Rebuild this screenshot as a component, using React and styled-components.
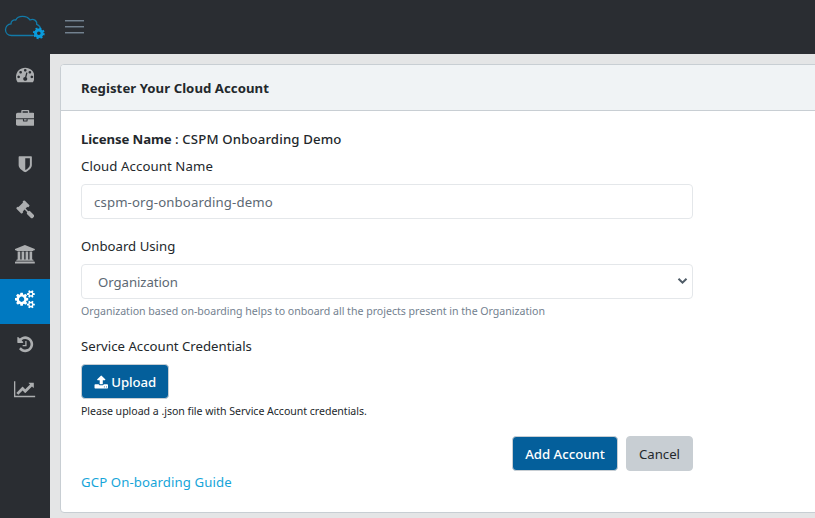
import React from "react";
import styled, { createGlobalStyle } from "styled-components";

const GlobalStyle = createGlobalStyle`
  * { box-sizing: border-box; }
  body {
    margin: 0;
    overflow: hidden;
    background: #e4e5e6;
    color: #23282c;
    font-family: "Noto Sans", "Open Sans", sans-serif;
    font-size: 13.2px;
    line-height: 21px;
  }
`;

const Page = styled.div`
  display: flex;
  flex-direction: column;
  width: 100vw;
  height: 100vh;
`;

const TopBar = styled.header`
  display: flex;
  align-items: center;
  flex: 0 0 54px;
  padding-left: 4px;
  background: #2a2d32;
`;

const Logo = styled.svg`
  width: 42px;
  height: 26px;
`;

const MenuButton = styled.button`
  display: flex;
  flex-direction: column;
  gap: 5px;
  width: 19px;
  margin: 0 0 2px 19px;
  padding: 0;
  border: 0;
  background: none;
`;

const MenuLine = styled.span`
  height: 1px;
  background: #73818f;
  box-shadow: 0 1px #4a545e;
`;

const Columns = styled.div`
  display: flex;
  flex: 1;
  min-height: 0;
`;

const Sidebar = styled.nav`
  flex: 0 0 50px;
  background: #2a2d32;
`;

const NavItem = styled.a`
  display: flex;
  align-items: center;
  justify-content: center;
  height: 45px;
  padding-bottom: 4.5px;
  color: ${(p) => (p.$active ? "#fff" : "#acaeb0")};
  background: ${(p) => (p.$active ? "#0079c1" : "transparent")};
`;

const Glyph = styled.svg`
  display: block;
  flex: none;
  height: ${(p) => p.$size}px;
  width: ${(p) => p.$size * p.$ratio}px;
  fill: currentColor;
`;

const Main = styled.main`
  flex: 1;
  padding: 10px 0 0 10px;
  min-width: 0;
`;

const Card = styled.section`
  width: 780px;
  height: 449px;
  border: 1px solid #c8ced3;
  border-radius: 4px;
  background: #fff;
  overflow: hidden;
`;

const CardHeader = styled.h1`
  height: 46px;
  margin: 0;
  padding: 13px 20px 11px;
  border-bottom: 1px solid #c8ced3;
  background: #f0f3f5;
  font-size: 13.2px;
  line-height: 21px;
  font-weight: 700;
`;

const Form = styled.form`
  display: flex;
  flex-direction: column;
  width: 652px;
  padding: 18px 20px 0;
`;

const Spaced = styled.span`
  letter-spacing: ${(p) => p.$track || 0}px;
  white-space: pre;
`;

const Line = styled.div`
  height: 21px;
  font-weight: 500;
`;

const Field = styled.div`
  display: flex;
  flex-direction: column;
  align-items: flex-start;
  height: ${(p) => p.$height}px;
  margin-top: ${(p) => p.$top || 0}px;
`;

const Label = styled.label`
  height: 21px;
  margin-bottom: 7px;
`;

const Control = styled.div`
  display: flex;
  align-items: center;
  justify-content: space-between;
  width: 100%;
  height: 35px;
  padding: 1px ${(p) => (p.$select ? "4px 0 16px" : "12px 0")};
  border: 1px solid #e4e7ea;
  border-radius: 4px;
  color: #5c6873;
`;

const Chevron = styled.svg`
  width: 11px;
  height: 8px;
  margin-bottom: 2px;
  fill: none;
  stroke: #4f5c67;
  stroke-width: 2;
`;

const Hint = styled.small`
  margin-top: ${(p) => p.$top}px;
  font-size: 10.6px;
  line-height: 17px;
  color: ${(p) => (p.$muted ? "#73818f" : "#23282c")};
`;

const Button = styled.button`
  display: flex;
  align-items: center;
  justify-content: center;
  gap: 3px;
  width: ${(p) => p.$width}px;
  height: 35px;
  padding: 1px 0 0;
  border: 1px solid #c8ced3;
  border-radius: 4px;
  font: inherit;
  font-weight: ${(p) => (p.$primary ? 500 : 400)};
  color: ${(p) => (p.$primary ? "#fff" : "#23282c")};
  background: ${(p) => (p.$primary ? "#045f9b" : "#c8ced3")};
`;

const Actions = styled.div`
  display: flex;
  justify-content: flex-end;
  gap: 8px;
`;

const GuideLink = styled.a`
  height: 21px;
  margin-top: 1px;
  color: #16a5d9;
`;

const SMALL_COG =
  "v140q0 16-149 31-12 27-30 52 51 113 51 138 0 4-4 7-122 71-124 71-8 0-46-47t-52-68q-20 2-30 2t-30-2q-14 21-52 68t-46 47q-2 0-124-71-4-3-4-7 0-25 51-138-18-25-30-52-149-15-149-31v-140q0-16 149-31 13-29 30-52-51-113-51-138 0-4 4-7 4-2 35-20t59-34 30-16q8 0 46 46.5t52 67.5q20-2 30-2t30 2q51-71 92-112l6-2q4 0 124 70 4 3 4 7 0 25-51 138 17 23 30 52 149 15 149 31z";

const ICONS = {
  dashboard: {
    width: 1792,
    d: "M384 1152q0-53-37.5-90.5t-90.5-37.5-90.5 37.5-37.5 90.5 37.5 90.5 90.5 37.5 90.5-37.5 37.5-90.5zm192-448q0-53-37.5-90.5t-90.5-37.5-90.5 37.5-37.5 90.5 37.5 90.5 90.5 37.5 90.5-37.5 37.5-90.5zm428 481l101-382q6-26-7.5-48.5t-38.5-29.5-48 6.5-30 39.5l-101 382q-60 5-107 43.5t-63 98.5q-20 77 20 146t117 89 146-20 89-117q16-60-6-117t-72-91zm660-33q0-53-37.5-90.5t-90.5-37.5-90.5 37.5-37.5 90.5 37.5 90.5 90.5 37.5 90.5-37.5 37.5-90.5zm-640-640q0-53-37.5-90.5t-90.5-37.5-90.5 37.5-37.5 90.5 37.5 90.5 90.5 37.5 90.5-37.5 37.5-90.5zm448 192q0-53-37.5-90.5t-90.5-37.5-90.5 37.5-37.5 90.5 37.5 90.5 90.5 37.5 90.5-37.5 37.5-90.5zm320 448q0 261-141 483-19 29-54 29h-1402q-35 0-54-29-141-221-141-483 0-182 71-348t191-286 286-191 348-71 348 71 286 191 191 286 71 348z",
  },
  briefcase: {
    width: 1792,
    d: "M640 256h512v-128h-512v128zm1152 640v480q0 66-47 113t-113 47h-1472q-66 0-113-47t-47-113v-480h672v160q0 26 19 45t45 19h320q26 0 45-19t19-45v-160h672zm-768 0v128h-256v-128h256zm768-480v384h-1792v-384q0-66 47-113t113-47h352v-160q0-40 28-68t68-28h576q40 0 68 28t28 68v160h352q66 0 113 47t47 113z",
  },
  shield: {
    width: 1792,
    d: "M1344 960v-640h-448v1137q119-63 213-137 235-184 235-360zm192-768v768q0 86-33.5 170.5t-83 150-118 127.5-126.5 103-121 77.5-89.5 49.5-42.5 20q-12 6-26 6t-26-6q-16-7-42.5-20t-89.5-49.5-121-77.5-126.5-103-118-127.5-83-150-33.5-170.5v-768q0-26 19-45t45-19h1152q26 0 45 19t19 45z",
  },
  gavel: {
    width: 1792,
    d: "M1771 1536q0 53-37 90l-107 108q-39 37-91 37-53 0-90-37l-363-364q-38-36-38-90 0-53 43-96l-256-256-126 126q-14 14-34 14t-34-14q2 2 12.5 12t12.5 13 10 11.5 10 13.5 6 13.5 5.5 16.5 1.5 18q0 38-28 68-3 3-16.5 18t-19 20.5-18.5 16.5-22 15.5-22 9-26 4.5q-40 0-68-28l-408-408q-28-28-28-68 0-13 4.5-26t9-22 15.5-22 16.5-18.5 20.5-19 18-16.5q30-28 68-28 10 0 18 1.5t16.5 5.5 13.5 6 13.5 10 11.5 10 13 12.5 12 12.5q-14-14-14-34t14-34l348-348q14-14 34-14t34 14q-2-2-12.5-12t-12.5-13-10-11.5-10-13.5-6-13.5-5.5-16.5-1.5-18q0-38 28-68 3-3 16.5-18t19-20.5 18.5-16.5 22-15.5 22-9 26-4.5q40 0 68 28l408 408q28 28 28 68 0 13-4.5 26t-9 22-15.5 22-16.5 18.5-20.5 19-18 16.5q-30 28-68 28-10 0-18-1.5t-16.5-5.5-13.5-6-13.5-10-11.5-10-13-12.5-12-12.5q14 14 14 34t-14 34l-126 126 256 256q43-43 96-43 52 0 91 37l363 363q37 39 37 91z",
  },
  bank: {
    width: 1920,
    d: "M960 0l960 384v128h-128q0 26-20.5 45t-48.5 19h-1526q-28 0-48.5-19t-20.5-45h-128v-128zm-704 640h256v768h128v-768h256v768h128v-768h256v768h128v-768h256v768h59q28 0 48.5 19t20.5 45v64h-1664v-64q0-26 20.5-45t48.5-19h59v-768zm1595 960q28 0 48.5 19t20.5 45v128h-1920v-128q0-26 20.5-45t48.5-19h1782z",
  },
  cogs: {
    x: -64,
    width: 1920,
    d:
      "M832 896q0-106-75-181t-181-75-181 75-75 181 75 181 181 75 181-75 75-181zm768 512q0-52-38-90t-90-38-90 38-38 90q0 53 37.5 90.5t90.5 37.5 90.5-37.5 37.5-90.5zm0-1024q0-52-38-90t-90-38-90 38-38 90q0 53 37.5 90.5t90.5 37.5 90.5-37.5 37.5-90.5zm-384 421v185q0 10-7 19.5t-16 10.5l-155 24q-11 35-32 76 34 48 90 115 7 11 7 20 0 12-7 19-23 30-82.5 89.5t-78.5 59.5q-11 0-21-7l-115-90q-37 19-77 31-11 108-23 155-7 24-30 24h-186q-11 0-20-7.5t-10-17.5l-23-153q-34-10-75-31l-118 89q-7 7-20 7-11 0-21-8-144-133-144-160 0-9 7-19 10-14 41-53t47-61q-23-44-35-82l-152-24q-10-1-17-9.5t-7-19.5v-185q0-10 7-19.5t16-10.5l155-24q11-35 32-76-34-48-90-115-7-11-7-20 0-12 7-20 22-30 82-89t79-59q11 0 21 7l115 90q34-18 77-32 11-108 23-154 7-24 30-24h186q11 0 20 7.5t10 17.5l23 153q34 10 75 31l118-89q8-7 20-7 11 0 21 8 144 133 144 160 0 8-7 19-12 16-42 54t-45 60q23 48 34 82l152 23q10 2 17 10.5t7 19.5z" +
      "M1856 1338" + SMALL_COG + "M1856 314" + SMALL_COG,
  },
  history: {
    width: 1792,
    d: "M1664 896q0 156-61 298t-164 245-245 164-298 61q-172 0-327-72.5t-264-204.5q-7-10-6.5-22.5t8.5-20.5l137-138q10-9 25-9 16 2 23 12 73 95 179 147t225 52q104 0 198.5-40.5t163.5-109.5 109.5-163.5 40.5-198.5-40.5-198.5-109.5-163.5-163.5-109.5-198.5-40.5q-98 0-188 35.5t-160 101.5l137 138q31 30 14 69-17 40-59 40h-448q-26 0-45-19t-19-45v-448q0-42 40-59 39-17 69 14l130 129q107-101 244.5-156.5t284.5-55.5q156 0 298 61t245 164 164 245 61 298zm-640-288v448q0 14-9 23t-23 9h-320q-14 0-23-9t-9-23v-64q0-14 9-23t23-9h224v-352q0-14 9-23t23-9h64q14 0 23 9t9 23z",
  },
  chart: {
    width: 2048,
    d: "M2048 1536v128h-2048v-1536h128v1408h1920zm-128-1248v435q0 21-19.5 29.5t-35.5-7.5l-121-121-633 633q-10 10-23 10t-23-10l-233-233-416 416-192-192 585-585q10-10 23-10t23 10l233 233 464-464-121-121q-16-16-7.5-35.5t29.5-19.5h435q14 0 23 9t9 23z",
  },
  upload: {
    width: 1792,
    d: "M1344 1472q0-26-19-45t-45-19-45 19-19 45 19 45 45 19 45-19 19-45zm256 0q0-26-19-45t-45-19-45 19-19 45 19 45 45 19 45-19 19-45zm128-224v320q0 40-28 68t-68 28h-1472q-40 0-68-28t-28-68v-320q0-40 28-68t68-28h427q21 56 70.5 92t110.5 36h256q61 0 110.5-36t70.5-92h427q40 0 68 28t28 68zm-325-648q-17 40-59 40h-256v448q0 26-19 45t-45 19h-256q-26 0-45-19t-19-45v-448h-256q-42 0-59-40-17-39 14-69l448-448q18-19 45-19t45 19l448 448q31 30 14 69z",
  },
};

const Icon = ({ name, size = 18.5 }) => (
  <Glyph
    viewBox={`${ICONS[name].x || 0} 0 ${ICONS[name].width} 1792`}
    $size={size}
    $ratio={ICONS[name].width / 1792}
    aria-hidden="true"
  >
    <path d={ICONS[name].d} />
  </Glyph>
);

const NAV = ["dashboard", "briefcase", "shield", "gavel", "bank", "cogs", "history", "chart"];

export default function App() {
  return (
    <Page>
      <GlobalStyle />
      <TopBar>
        <Logo viewBox="0 0 42 26" aria-label="Cloud">
          <path
            d="M29 21.5H7.5C4 21.5 1.5 19 1.5 15.7C1.5 12.5 4 10 7 9.8C7 7.5 9 5.5 11.8 6C13 3.300 15.700 2.300 18.500 2.300C22 2.300 24.700 3.800 26 6C29.500 4.300 33.300 6.500 32.700 10.300C35 11.300 36.700 13 36.500 15.500"
            fill="none"
            stroke="#127aa8"
            strokeWidth="1.300"
          />
          <circle cx="34.800" cy="19.300" r="3.300" fill="none" stroke="#0a9bdc" strokeWidth="3" />
          <circle cx="34.800" cy="19.300" r="5" fill="none" stroke="#0a9bdc" strokeWidth="1.800" strokeDasharray="1.960 1.960" />
        </Logo>
        <MenuButton aria-label="Toggle menu">
          <MenuLine />
          <MenuLine />
          <MenuLine />
        </MenuButton>
      </TopBar>
      <Columns>
        <Sidebar>
          {NAV.map((name) => (
            <NavItem key={name} $active={name === "cogs"}>
              <Icon name={name} />
            </NavItem>
          ))}
        </Sidebar>
        <Main>
          <Card>
            <CardHeader>
              <Spaced $track={0.04}>Register Your Cloud Account</Spaced>
            </CardHeader>
            <Form>
              <Line>
                <Spaced $track={-0.12}>
                  <b>License Name</b>
                </Spaced>
                <Spaced $track={0.15}> : CSPM Onboarding Demo</Spaced>
              </Line>
              <Field $top={6} $height={80}>
                <Label><Spaced $track={0.1}>Cloud Account Name</Spaced></Label>
                <Control><Spaced $track={0.13}>cspm-org-onboarding-demo</Spaced></Control>
              </Field>
              <Field $height={100}>
                <Label><Spaced>Onboard Using</Spaced></Label>
                <Control $select>
                  <Spaced $track={-0.06}>Organization</Spaced>
                  <Chevron viewBox="0 0 11 8"><path d="M1.500 1.800L5.500 5.700L9.500 1.800" /></Chevron>
                </Control>
                <Hint $muted $top={4}>
                  <Spaced $track={-0.012}>Organization based on-boarding helps to onboard all the projects present in the Organization</Spaced>
                </Hint>
              </Field>
              <Field $height={100}>
                <Label><Spaced>Service Account Credentials</Spaced></Label>
                <Button type="button" $primary $width={88}>
                  <Icon name="upload" size={14.5} />
                  <Spaced $track={-0.08}>Upload</Spaced>
                </Button>
                <Hint $top={4}>
                  <Spaced $track={-0.035}>Please upload a .json file with Service Account credentials.</Spaced>
                </Hint>
              </Field>
              <Actions>
                <Button type="button" $primary $width={106}><Spaced>Add Account</Spaced></Button>
                <Button type="button" $width={67}><Spaced>Cancel</Spaced></Button>
              </Actions>
              <GuideLink><Spaced $track={0.1}>GCP On-boarding Guide</Spaced></GuideLink>
            </Form>
          </Card>
        </Main>
      </Columns>
    </Page>
  );
}
